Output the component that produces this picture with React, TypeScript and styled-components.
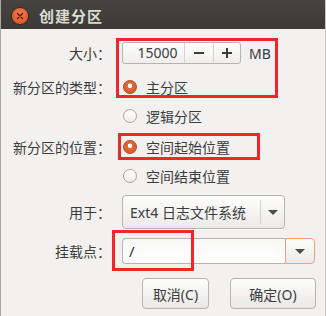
import React from "react";
import styled, { createGlobalStyle } from "styled-components";

const Global = createGlobalStyle`
  html, body { margin: 0; padding: 0; background: #f2f1f0; }
  body { width: 326px; height: 316px; overflow: hidden; }
  * { box-sizing: border-box; }
`;

const FONT = `"Noto Sans", "Noto Sans CJK SC", sans-serif`;

const Window = styled.div`
  position: relative;
  width: 326px;
  height: 316px;
  background: #f2f1f0;
  font-family: ${FONT};
  font-size: 14px;
  color: #3c3c3c;
  border-left: 1px solid #a9a8a4;
  border-right: 1px solid #c8c6c2;
  overflow: hidden;
`;

const TitleBar = styled.div`
  height: 29px;
  background: linear-gradient(#45443f, #3b3a36);
  display: flex;
  align-items: center;
  padding-left: 11px;
  gap: 11px;
`;

const CloseBtn = styled.div`
  width: 16px;
  height: 16px;
  border-radius: 50%;
  background: radial-gradient(circle at 50% 35%, #f57a4d, #df4c1c);
  box-shadow: 0 0 0 1px #2e2d2a;
  display: flex;
  align-items: center;
  justify-content: center;
  margin-top: 2px;
`;

const Title = styled.div`
  color: #dfdbd2;
  font-weight: bold;
  font-size: 15px;
  letter-spacing: 1px;
  margin-top: 1px;
`;

const Body = styled.div`
  display: flex;
  flex-direction: column;
  padding-top: 13px;
`;

const Row = styled.div<{ $h: number; $mt: number }>`
  display: grid;
  grid-template-columns: 112px 1fr;
  align-items: center;
  height: ${(p) => p.$h}px;
  margin-top: ${(p) => p.$mt}px;
`;

const Label = styled.div`
  text-align: right;
  padding-right: 2px;
  white-space: nowrap;
  color: #3c3c3c;
`;

const Cell = styled.div<{ $pl?: number }>`
  display: flex;
  align-items: center;
  padding-left: ${(p) => p.$pl ?? 9}px;
  height: 100%;
`;

const Spin = styled.div`
  display: flex;
  height: 22px;
  width: 119px;
  border: 1px solid #b6b4af;
  border-radius: 3px;
  background: linear-gradient(#ffffff, #efeeec);
  overflow: hidden;
`;

const SpinValue = styled.div`
  width: 61px;
  text-align: right;
  padding-right: 6px;
  line-height: 20px;
  font-size: 14px;
  color: #3c3c3c;
`;

const SpinBtn = styled.div<{ $w: number }>`
  width: ${(p) => p.$w}px;
  border-left: 1px solid #d3d1cc;
  display: flex;
  align-items: center;
  justify-content: center;
`;

const Unit = styled.div`
  margin-left: 8px;
  font-size: 14px;
`;

const Radio = styled.div<{ $on?: boolean }>`
  width: 14px;
  height: 14px;
  border-radius: 50%;
  margin-left: 1px;
  margin-right: 9px;
  border: 1px solid ${(p) => (p.$on ? "#b04a1f" : "#a8a6a1")};
  background: ${(p) =>
    p.$on
      ? "radial-gradient(circle at 50% 40%, #ffffff 0 2px, #e46b3c 2.5px, #c9541f 100%)"
      : "linear-gradient(#ffffff, #eeedeb)"};
  flex: none;
`;

const Combo = styled.div`
  display: flex;
  height: 34px;
  width: 163px;
  border: 1px solid #b6b4af;
  border-radius: 4px;
  background: linear-gradient(#fdfdfc, #ebeae8);
  box-shadow: 0 1px 0 rgba(255, 255, 255, 0.8);
`;

const ComboText = styled.div`
  flex: 1;
  display: flex;
  align-items: center;
  padding-left: 7px;
  font-size: 14px;
  white-space: nowrap;
  border-right: 1px solid #d3d1cc;
  margin: 4px 0;
`;

const ComboArrow = styled.div<{ $w: number }>`
  width: ${(p) => p.$w}px;
  display: flex;
  align-items: center;
  justify-content: center;
`;

const Tri = styled.div`
  width: 0;
  height: 0;
  border-left: 5px solid transparent;
  border-right: 5px solid transparent;
  border-top: 5px solid #4c4c4c;
`;

const Entry = styled.div`
  display: flex;
  height: 26px;
  width: 193px;
`;

const EntryField = styled.div`
  flex: 1;
  border: 1px solid #b6b4af;
  border-right: none;
  border-radius: 4px 0 0 4px;
  background: linear-gradient(#f8f8f7, #ffffff);
  display: flex;
  align-items: center;
  padding-left: 6px;
  font-size: 15px;
  color: #333;
`;

const EntryBtn = styled.div`
  width: 30px;
  border: 1px solid #f0a079;
  border-radius: 0 4px 4px 0;
  background: linear-gradient(#fdfdfc, #ebeae8);
  display: flex;
  align-items: center;
  justify-content: center;
`;

const Buttons = styled.div`
  display: flex;
  justify-content: flex-end;
  gap: 21px;
  padding-right: 9px;
  margin-top: 14px;
`;

const Button = styled.div<{ $w: number }>`
  width: ${(p) => p.$w}px;
  height: 31px;
  border: 1px solid #b6b4af;
  border-radius: 4px;
  background: linear-gradient(#fdfdfc, #e9e8e6);
  display: flex;
  align-items: center;
  justify-content: center;
  font-size: 14px;
  color: #3c3c3c;
`;

const Mark = styled.div<{ $x: number; $y: number; $w: number; $h: number }>`
  position: absolute;
  left: ${(p) => p.$x}px;
  top: ${(p) => p.$y}px;
  width: ${(p) => p.$w}px;
  height: ${(p) => p.$h}px;
  border: 3px solid #f0262d;
  pointer-events: none;
`;

export default function App() {
  return (
    <>
      <Global />
      <Window>
        <TitleBar>
          <CloseBtn>
            <svg width="8" height="8" viewBox="0 0 8 8">
              <path d="M1.5 1.5 L6.5 6.5 M6.5 1.5 L1.5 6.5" stroke="#4a1a08" strokeWidth="1.4" strokeLinecap="round" />
            </svg>
          </CloseBtn>
          <Title>创建分区</Title>
        </TitleBar>
        <Body>
          <Row $h={22} $mt={0}>
            <Label>大小：</Label>
            <Cell>
              <Spin>
                <SpinValue>15000</SpinValue>
                <SpinBtn $w={30}>
                  <svg width="10" height="10" viewBox="0 0 10 10">
                    <rect x="0" y="4" width="10" height="2" fill="#3c3c3c" />
                  </svg>
                </SpinBtn>
                <SpinBtn $w={27}>
                  <svg width="10" height="10" viewBox="0 0 10 10">
                    <rect x="0" y="4" width="10" height="2" fill="#3c3c3c" />
                    <rect x="4" y="0" width="2" height="10" fill="#3c3c3c" />
                  </svg>
                </SpinBtn>
              </Spin>
              <Unit>MB</Unit>
            </Cell>
          </Row>
          <Row $h={22} $mt={12}>
            <Label>新分区的类型：</Label>
            <Cell>
              <Radio $on />
              主分区
            </Cell>
          </Row>
          <Row $h={22} $mt={7}>
            <Label />
            <Cell>
              <Radio />
              逻辑分区
            </Cell>
          </Row>
          <Row $h={22} $mt={9}>
            <Label>新分区的位置：</Label>
            <Cell>
              <Radio $on />
              空间起始位置
            </Cell>
          </Row>
          <Row $h={22} $mt={7}>
            <Label />
            <Cell>
              <Radio />
              空间结束位置
            </Cell>
          </Row>
          <Row $h={34} $mt={8}>
            <Label>用于：</Label>
            <Cell>
              <Combo>
                <ComboText>Ext4 日志文件系统</ComboText>
                <ComboArrow $w={23}>
                  <Tri />
                </ComboArrow>
              </Combo>
            </Cell>
          </Row>
          <Row $h={26} $mt={9}>
            <Label>挂载点：</Label>
            <Cell>
              <Entry>
                <EntryField>/</EntryField>
                <EntryBtn>
                  <Tri />
                </EntryBtn>
              </Entry>
            </Cell>
          </Row>
          <Buttons>
            <Button $w={67}>取消(C)</Button>
            <Button $w={86}>确定(O)</Button>
          </Buttons>
        </Body>
        <Mark $x={115} $y={38} $w={162} $h={60} />
        <Mark $x={117} $y={133} $w={142} $h={27} />
        <Mark $x={111} $y={230} $w={82} $h={41} />
      </Window>
    </>
  );
}
